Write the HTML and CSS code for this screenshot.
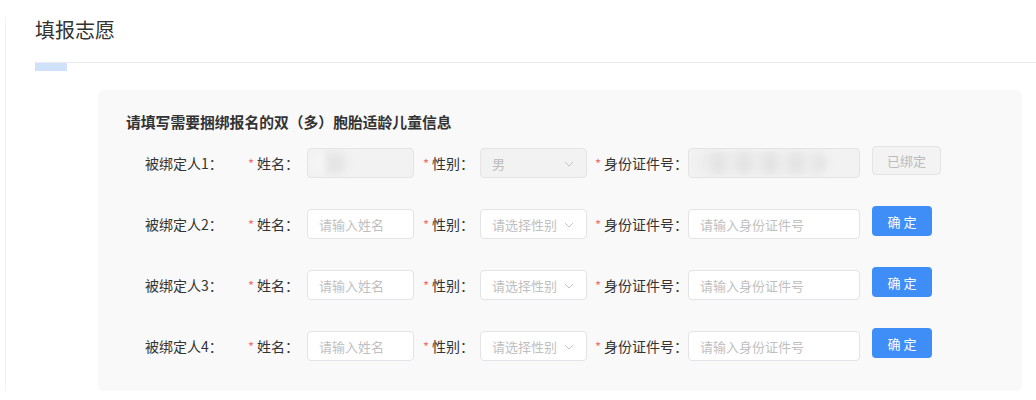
FILE: index.html
```html
<!DOCTYPE html>
<html lang="zh-CN">
<head>
<meta charset="utf-8">
<title>填报志愿</title>
<link rel="stylesheet" href="styles.css">
</head>
<body>
<div class="page">
  <div class="side-line"></div>
  <div class="main">
    <h1 class="title">填报志愿</h1>
    <div class="tabs"><span class="tab-ink"></span></div>
    <div class="panel">
      <div class="panel-title">请填写需要捆绑报名的双（多）胞胎适龄儿童信息</div>

      <div class="row">
        <span class="row-label">被绑定人1：</span>
        <span class="lbl lbl-name"><i>*</i>姓名：</span>
        <span class="input input-name is-disabled"><span class="blur blur-name"></span></span>
        <span class="lbl lbl-sex"><i>*</i>性别：</span>
        <span class="select is-disabled"><span class="val">男</span><svg class="chev" viewBox="0 0 12 12"><path d="M2 4l4 4 4-4" fill="none" stroke="#c0c4cc" stroke-width="1"/></svg></span>
        <span class="lbl lbl-id"><i>*</i>身份证件号：</span>
        <span class="input input-id is-disabled"><span class="blur blur-id"></span></span>
        <span class="btn btn-disabled">已绑定</span>
      </div>

      <div class="row">
        <span class="row-label">被绑定人2：</span>
        <span class="lbl lbl-name"><i>*</i>姓名：</span>
        <span class="input input-name"><span class="ph">请输入姓名</span></span>
        <span class="lbl lbl-sex"><i>*</i>性别：</span>
        <span class="select"><span class="ph">请选择性别</span><svg class="chev" viewBox="0 0 12 12"><path d="M2 4l4 4 4-4" fill="none" stroke="#c0c4cc" stroke-width="1"/></svg></span>
        <span class="lbl lbl-id"><i>*</i>身份证件号：</span>
        <span class="input input-id"><span class="ph">请输入身份证件号</span></span>
        <span class="btn btn-primary">确 定</span>
      </div>

      <div class="row">
        <span class="row-label">被绑定人3：</span>
        <span class="lbl lbl-name"><i>*</i>姓名：</span>
        <span class="input input-name"><span class="ph">请输入姓名</span></span>
        <span class="lbl lbl-sex"><i>*</i>性别：</span>
        <span class="select"><span class="ph">请选择性别</span><svg class="chev" viewBox="0 0 12 12"><path d="M2 4l4 4 4-4" fill="none" stroke="#c0c4cc" stroke-width="1"/></svg></span>
        <span class="lbl lbl-id"><i>*</i>身份证件号：</span>
        <span class="input input-id"><span class="ph">请输入身份证件号</span></span>
        <span class="btn btn-primary">确 定</span>
      </div>

      <div class="row">
        <span class="row-label">被绑定人4：</span>
        <span class="lbl lbl-name"><i>*</i>姓名：</span>
        <span class="input input-name"><span class="ph">请输入姓名</span></span>
        <span class="lbl lbl-sex"><i>*</i>性别：</span>
        <span class="select"><span class="ph">请选择性别</span><svg class="chev" viewBox="0 0 12 12"><path d="M2 4l4 4 4-4" fill="none" stroke="#c0c4cc" stroke-width="1"/></svg></span>
        <span class="lbl lbl-id"><i>*</i>身份证件号：</span>
        <span class="input input-id"><span class="ph">请输入身份证件号</span></span>
        <span class="btn btn-primary">确 定</span>
      </div>
    </div>
  </div>
</div>
</body>
</html>
```

FILE: styles.css
```css
* { box-sizing: border-box; }
html, body { margin: 0; padding: 0; background: #fff; }
body {
  font-family: "Noto Sans CJK SC", "Liberation Sans", sans-serif;
  color: #333;
  width: 1036px;
  height: 400px;
  overflow: hidden;
}
.page {
  display: flex;
  padding-top: 17px;
  height: 400px;
}
.side-line {
  width: 1px;
  height: 374px;
  margin-left: 5px;
  background: #eef1f7;
}
.main {
  flex: 1;
  padding-left: 29px;
}
.title {
  margin: 0;
  font-size: 20px;
  font-weight: 400;
  line-height: 26px;
  color: #333;
}
.tabs {
  margin-top: 19px;
  height: 9px;
  border-top: 1px solid #e9ebef;
}
.tab-ink {
  display: block;
  width: 32px;
  height: 8px;
  background: #cfe1fb;
}
.panel {
  margin-top: 19px;
  margin-left: 63px;
  width: 924px;
  height: 301px;
  background: #f9f9f9;
  border-radius: 6px;
  padding: 22px 0 0 28px;
}
.panel-title {
  font-size: 14.8px;
  font-weight: 700;
  line-height: 20px;
  color: #333;
}
.row {
  display: flex;
  align-items: center;
  height: 30px;
  margin-top: 31px;
  padding-left: 19px;
  font-size: 14px;
}
.panel-title + .row { margin-top: 16px; }
.row-label {
  width: 103px;
  flex-shrink: 0;
  color: #333;
}
.lbl { color: #333; white-space: nowrap; flex-shrink: 0; }
.lbl i {
  font-style: normal;
  color: #f56c6c;
  margin-right: 3px;
  font-size: 13px;
}
.lbl-name { width: 59px; }
.lbl-sex { width: 66px; padding-left: 9px; }
.lbl-id { width: 101px; padding-left: 8px; }
.input, .select {
  height: 30px;
  flex-shrink: 0;
  background: #fff;
  border: 1px solid #e2e4e8;
  border-radius: 4px;
  display: flex;
  align-items: center;
  padding-left: 11px;
  font-size: 13px;
  position: relative;
  overflow: hidden;
}
.input-name { width: 107px; }
.input-id { width: 172px; }
.select { width: 107px; }
.ph { color: #bfbfbf; }
.val { color: #bbb; }
.is-disabled {
  background: #f2f2f2;
  border-color: #e4e4e4;
}
.chev {
  position: absolute;
  right: 11px;
  top: 9px;
  width: 12px;
  height: 12px;
}
.blur {
  display: block;
  filter: blur(4px);
}
.blur-name {
  width: 32px;
  height: 22px;
  margin-left: -5px;
  background: linear-gradient(90deg, #f8f8f8 0 35%, #e4e4e4 35% 100%);
  border-radius: 45%;
}
.blur-id {
  width: 128px;
  height: 22px;
  margin-left: -2px;
  background: repeating-linear-gradient(90deg, #ececec 0 14px, #e2e2e2 14px 26px);
  border-radius: 10px;
}
.btn {
  margin-left: 12px;
  margin-bottom: 6px;
  height: 30px;
  flex-shrink: 0;
  border-radius: 4px;
  display: flex;
  align-items: center;
  justify-content: center;
  font-size: 13px;
}
.btn-disabled {
  width: 69px;
  height: 29px;
  background: #f3f3f3;
  border: 1px solid #e4e4e4;
  color: #bbb;
}
.btn-primary {
  width: 60px;
  background: #3f8ef7;
  color: #fff;
}
```
